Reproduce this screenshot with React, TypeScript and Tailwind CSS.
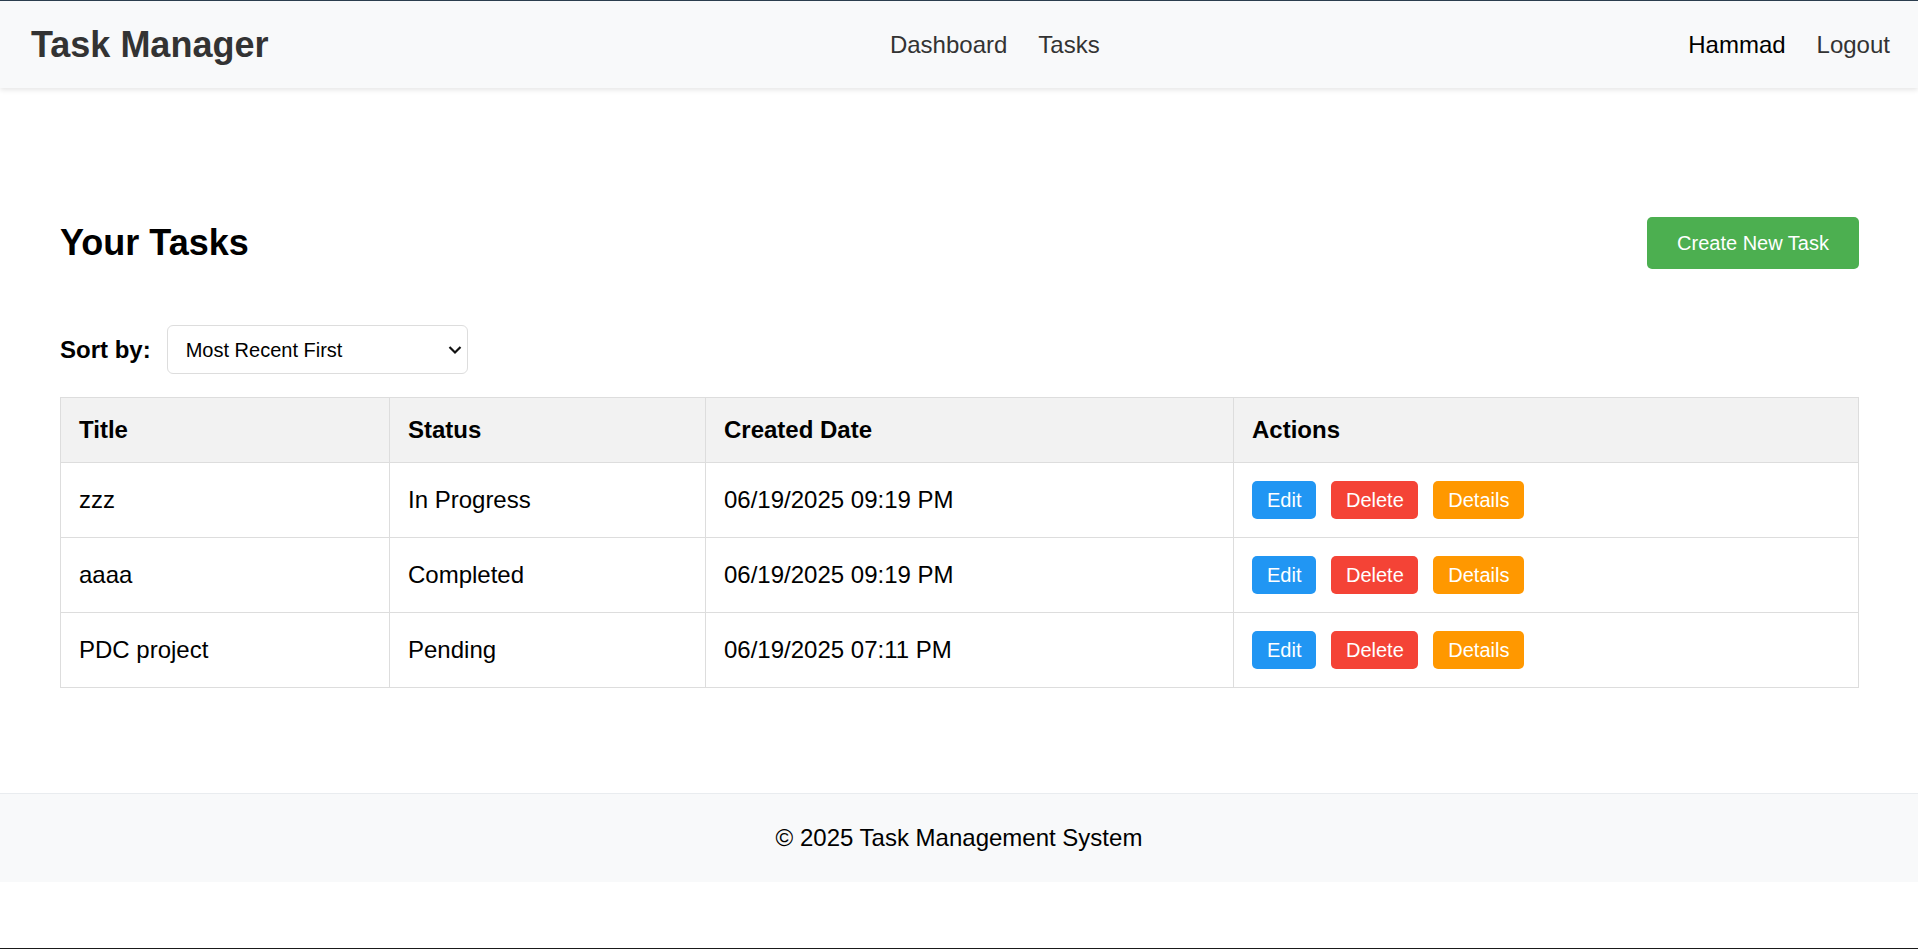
import React from "react";

type Task = { title: string; status: string; created: string };

const tasks: Task[] = [
  { title: "zzz", status: "In Progress", created: "06/19/2025 09:19 PM" },
  { title: "aaaa", status: "Completed", created: "06/19/2025 09:19 PM" },
  { title: "PDC project", status: "Pending", created: "06/19/2025 07:11 PM" },
];

function Header() {
  return (
    <header className="relative z-10 flex h-[87px] items-center justify-between bg-[#f8f9fa] pl-[31px] pr-[28px] shadow-[0_2px_5px_rgba(0,0,0,0.1)]">
      <div className="text-[36px] font-bold text-[#333]">Task Manager</div>
      <nav className="flex gap-[31px] pl-[33px] text-[24px] text-[#333]">
        <a href="#" className="no-underline">Dashboard</a>
        <a href="#" className="no-underline">Tasks</a>
      </nav>
      <div className="flex gap-[31px] text-[24px]">
        <span className="text-black">Hammad</span>
        <a href="#" className="text-[#333] no-underline">Logout</a>
      </div>
    </header>
  );
}

function Actions() {
  return (
    <div className="flex gap-[15px] text-[20px] text-white">
      <button className="rounded-[5px] bg-[#2196f3] px-[15px] py-[7.5px]">Edit</button>
      <button className="rounded-[5px] bg-[#f44336] px-[14.5px] py-[7.5px]">Delete</button>
      <button className="rounded-[5px] bg-[#ff9800] px-[15px] py-[7.5px]">Details</button>
    </div>
  );
}

export default function App() {
  return (
    <div className="flex h-[949px] flex-col border-t border-b border-t-[#2c3e50] border-b-[#1a1a1a] bg-white font-['Liberation_Sans',Arial,sans-serif] leading-[normal] text-black">
      <Header />

      <main className="pl-[60px] pr-[59px] pt-[129px] pb-[105px]">
        <div className="flex h-[52px] items-center justify-between">
          <h2 className="text-[36px] font-bold">Your Tasks</h2>
          <button className="h-[52px] rounded-[5px] bg-[#4caf50] px-[30px] text-[20px] text-white">
            Create New Task
          </button>
        </div>

        <div className="mt-[56px] flex items-center gap-[16px]">
          <label className="text-[24px] font-bold">Sort by:</label>
          <div className="relative">
            <select className="h-[49px] w-[301px] appearance-none rounded-[6px] border border-[#ddd] bg-white pl-[18px] text-[20px] text-black outline-none">
              <option>Most Recent First</option>
              <option>Oldest First</option>
            </select>
            <svg
              className="pointer-events-none absolute right-[6px] top-1/2 -translate-y-1/2"
              width="14"
              height="9"
              viewBox="0 0 14 9"
              fill="none"
            >
              <path d="M1.5 1.5 L7 7 L12.5 1.5" stroke="#111" strokeWidth="2.2" />
            </svg>
          </div>
        </div>

        <table className="mt-[23px] w-full table-fixed border-collapse text-[24px]">
          <colgroup>
            <col className="w-[329px]" />
            <col className="w-[316px]" />
            <col className="w-[528px]" />
            <col />
          </colgroup>
          <thead>
            <tr className="bg-[#f2f2f2]">
              {["Title", "Status", "Created Date", "Actions"].map((h) => (
                <th key={h} className="border border-[#ddd] px-[18px] py-[18px] text-left font-bold">
                  {h}
                </th>
              ))}
            </tr>
          </thead>
          <tbody>
            {tasks.map((t) => (
              <tr key={t.title}>
                <td className="border border-[#ddd] px-[18px] py-[18px]">{t.title}</td>
                <td className="border border-[#ddd] px-[18px] py-[18px]">{t.status}</td>
                <td className="border border-[#ddd] px-[18px] py-[18px]">{t.created}</td>
                <td className="border border-[#ddd] px-[18px] py-[18px]">
                  <Actions />
                </td>
              </tr>
            ))}
          </tbody>
        </table>
      </main>

      <footer className="flex h-[89px] items-center justify-center border-t border-[#e9ecef] bg-[#f8f9fa] text-[24px]">
        © 2025 Task Management System
      </footer>
    </div>
  );
}
